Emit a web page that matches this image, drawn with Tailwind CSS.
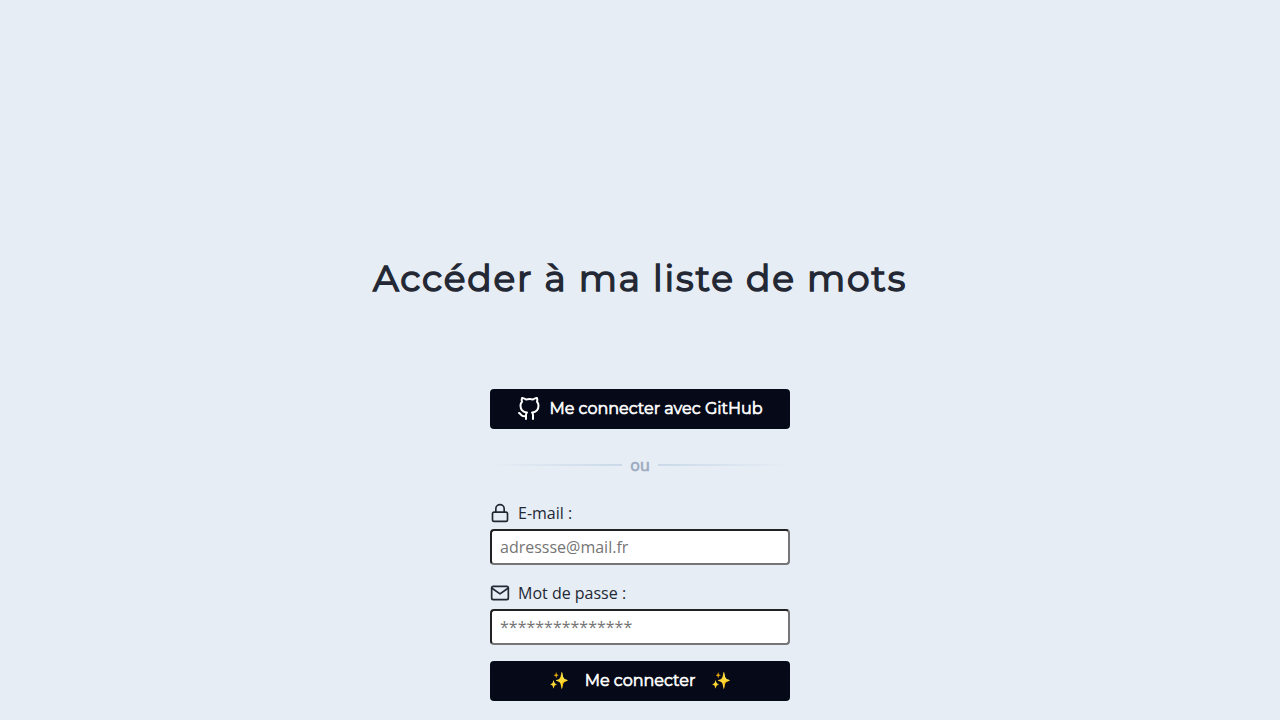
<!DOCTYPE html>
<html lang="fr">
<head>
<meta charset="utf-8">
<meta name="viewport" content="width=device-width, initial-scale=1">
<title>Accéder à ma liste de mots</title>
<script src="https://cdn.jsdelivr.net/npm/@tailwindcss/browser@4"></script>
</head>
<body class="min-h-screen bg-[#e6edf5] font-['Open_Sans',sans-serif] text-base text-[#232834]">
<main class="flex flex-col items-center px-4 pt-64 pb-5">
  <h1 class="text-center font-[Montserrat,Inter,sans-serif] text-4xl leading-[44px] font-normal tracking-wider [-webkit-text-stroke:0.04em_currentColor]">Accéder à ma liste de mots</h1>
  <div class="mt-[89px] w-full max-w-[300px]">
    <button type="button" class="flex h-10 w-full items-center justify-center gap-2 rounded-sm bg-[#060a18] font-[Montserrat,Inter,sans-serif] font-normal text-white">
      <svg class="size-6" viewBox="0 0 24 24" fill="none" stroke="currentColor" stroke-width="2" stroke-linecap="round" stroke-linejoin="round" overflow="visible" aria-hidden="true"><path d="M9 19c-5 1.500-5-2.500-7-3m14 6v-3.870a3.370 3.370 0 0 0-.94-2.610c3.140-.35 6.440-1.540 6.440-7A5.440 5.440 0 0 0 20 4.770 5.070 5.070 0 0 0 19.910 1S18.730.65 16 2.480a13.380 13.380 0 0 0-7 0C6.270.65 5.090 1 5.090 1A5.070 5.070 0 0 0 5 4.770a5.440 5.440 0 0 0-1.500 3.780c0 5.420 3.300 6.610 6.440 7A3.370 3.370 0 0 0 9 18.130V22"/></svg>
      <span class="[-webkit-text-stroke:0.04em_currentColor]">Me connecter avec GitHub</span>
    </button>
    <div class="my-6 flex items-center gap-2 text-[#9caabf]">
      <span class="h-0.5 flex-1 bg-linear-to-r from-transparent to-[#cbd9ea]"></span>
      <span class="leading-6 [-webkit-text-stroke:0.04em_currentColor]">ou</span>
      <span class="h-0.5 flex-1 bg-linear-to-l from-transparent to-[#cbd9ea]"></span>
    </div>
    <form class="flex flex-col gap-4">
      <div class="flex flex-col gap-1">
        <label for="email" class="flex items-center gap-2 leading-6">
          <svg class="size-5" viewBox="0 0 24 24" fill="none" stroke="currentColor" stroke-width="2" stroke-linecap="round" stroke-linejoin="round" aria-hidden="true"><rect x="3" y="11" width="18" height="11" rx="2"/><path d="M7 11V7a5 5 0 0 1 10 0v4"/></svg>
          <span>E-mail :</span>
        </label>
        <input id="email" type="email" placeholder="adressse@mail.fr" class="h-9 w-full rounded-sm border-2 border-[#767676] bg-white px-2 [border-style:inset] placeholder:text-[#757575]">
      </div>
      <div class="flex flex-col gap-1">
        <label for="password" class="flex items-center gap-2 leading-6">
          <svg class="size-5" viewBox="0 0 24 24" fill="none" stroke="currentColor" stroke-width="2" stroke-linecap="round" stroke-linejoin="round" aria-hidden="true"><rect x="2" y="4" width="20" height="16" rx="2"/><path d="m2 6 10 7 10-7"/></svg>
          <span>Mot de passe :</span>
        </label>
        <input id="password" type="password" placeholder="***************" class="h-9 w-full rounded-sm border-2 border-[#767676] bg-white px-2 [border-style:inset] placeholder:text-[#757575]">
      </div>
      <button type="submit" class="flex h-10 w-full items-center justify-center gap-4 rounded-sm bg-[#060a18] font-[Montserrat,Inter,sans-serif] font-normal text-white">
        <span>✨</span><span class="[-webkit-text-stroke:0.04em_currentColor]">Me connecter</span><span>✨</span>
      </button>
    </form>
  </div>
</main>
</body>
</html>
